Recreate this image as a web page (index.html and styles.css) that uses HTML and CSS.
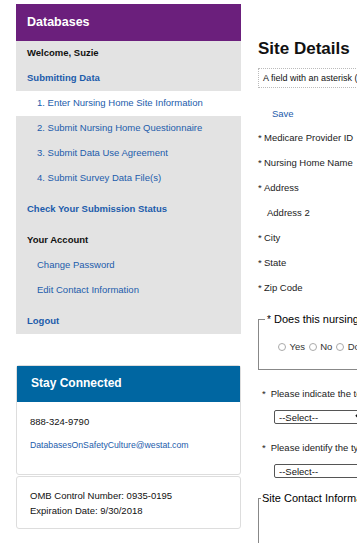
FILE: index.html
```html
<!DOCTYPE html>
<html lang="en">
<head>
  <meta charset="UTF-8" />
  <title>Site Details</title>
  <link rel="stylesheet" href="styles.css">
</head>
<body>
  <div class="page">
    <!-- left column -->
    <div class="sidebar">
      <div class="db-title">Databases</div>
      <div class="nav">
        <div class="nav-head">Welcome, Suzie</div>
        <a class="nav-link bold" href="#">Submitting Data</a>
        <a class="nav-sub current" href="#">1. Enter Nursing Home Site Information</a>
        <a class="nav-sub" href="#">2. Submit Nursing Home Questionnaire</a>
        <a class="nav-sub" href="#">3. Submit Data Use Agreement</a>
        <a class="nav-sub" href="#">4. Submit Survey Data File(s)</a>
        <a class="nav-link bold gap" href="#">Check Your Submission Status</a>
        <div class="nav-head gap">Your Account</div>
        <a class="nav-sub" href="#">Change Password</a>
        <a class="nav-sub" href="#">Edit Contact Information</a>
        <a class="nav-link bold gap" href="#">Logout</a>
      </div>

      <div class="card connect">
        <div class="card-head">Stay Connected</div>
        <div class="card-body">
          <div class="phone">888-324-9790</div>
          <a class="mail" href="#">DatabasesOnSafetyCulture@westat.com</a>
        </div>
      </div>
      <div class="card omb">
        <div>OMB Control Number: 0935-0195</div>
        <div>Expiration Date: 9/30/2018</div>
      </div>
    </div>

    <!-- main form -->
    <div class="main">
      <h2>Site Details</h2>
      <div class="note">A field with an asterisk (*) before it is a required field.</div>
      <a class="save" href="#">Save</a>

      <div class="field"><span class="star">*</span>Medicare Provider ID</div>
      <div class="field"><span class="star">*</span>Nursing Home Name</div>
      <div class="field"><span class="star">*</span>Address</div>
      <div class="field"><span class="star blank"></span>Address 2</div>
      <div class="field"><span class="star">*</span>City</div>
      <div class="field"><span class="star">*</span>State</div>
      <div class="field"><span class="star">*</span>Zip Code</div>

      <fieldset class="group">
        <legend><span class="star">*</span> Does this nursing home participate in the Medicare program?</legend>
        <div class="radios">
          <label><input type="radio" name="medicare" /> Yes</label>
          <label><input type="radio" name="medicare" /> No</label>
          <label><input type="radio" name="medicare" /> Don't know</label>
        </div>
      </fieldset>

      <div class="q"><span class="star">*</span> Please indicate the total number of beds in this nursing home</div>
      <select class="pick wide"><option>--Select--</option></select>

      <div class="q"><span class="star">*</span> Please identify the type of ownership of this nursing home</div>
      <select class="pick"><option>--Select--</option></select>

      <fieldset class="group contact">
        <legend>Site Contact Information</legend>
      </fieldset>
    </div>
  </div>
</body>
</html>
```

FILE: styles.css
```css
html, body {
  margin: 0;
  padding: 0;
  overflow: hidden;
  background: #fff;
}

body {
  font-family: "Liberation Sans", Arial, sans-serif;
  font-size: 9.5px;
  color: #222;
}

a {
  text-decoration: none;
  color: #1c5cab;
}

.page {
  display: flex;
  align-items: flex-start;
  width: 900px;
  padding: 4px 0 0 16px;
}

/* sidebar */
.sidebar {
  width: 225px;
  flex: none;
}

.db-title {
  background: #6b1f7c;
  color: #fff;
  font-weight: bold;
  font-size: 12.5px;
  height: 37px;
  line-height: 37px;
  padding-left: 11px;
}

.nav {
  background: #e3e3e3;
}

.nav-head,
.nav-link,
.nav-sub {
  display: block;
  line-height: 23px;
  height: 23px;
  padding: 0 0 2px 11px;
}

.nav-head {
  font-weight: bold;
  color: #111;
}

.bold {
  font-weight: bold;
}

.nav-sub {
  padding-left: 21px;
}

.nav-sub.current {
  background: #fff;
}

.gap {
  margin-top: 6px;
}

.card {
  border: 1px solid #ddd;
  border-radius: 3px;
  background: #fff;
}

.connect {
  margin-top: 31px;
}

.card-head {
  background: #0066a1;
  color: #fff;
  font-weight: bold;
  font-size: 12px;
  height: 36px;
  line-height: 35px;
  padding-left: 14px;
}

.card-body {
  padding: 13px 13px 22px;
}

.phone {
  line-height: 14px;
  color: #111;
}

.mail {
  display: block;
  margin-top: 9px;
  font-size: 8.7px;
  line-height: 14px;
}

.omb {
  margin-top: 1px;
  padding: 11px 13px 10px;
  line-height: 15px;
  color: #111;
}

/* main */
.main {
  width: 600px;
  flex: none;
  margin-left: 17px;
}

h2 {
  margin: 35px 0 0;
  font-size: 17px;
  line-height: 20px;
  color: #111;
}

.note {
  margin-top: 9px;
  height: 18px;
  line-height: 18px;
  border: 1px dotted #bbb;
  padding-left: 4px;
  font-size: 9px;
  color: #111;
}

.save {
  display: block;
  margin-top: 13px;
  padding-left: 14px;
  line-height: 25px;
}

.field {
  line-height: 24px;
  height: 24px;
  padding-bottom: 1px;
}

.star {
  display: inline-block;
  width: 6px;
}

.star.blank {
  width: 9px;
}

.group {
  margin: 11px 0 0;
  padding: 0 0 0 19px;
  border: 1px solid #888;
  border-radius: 0;
}

.group legend {
  margin-left: -13px;
  padding: 0 2px;
  font-size: 11px;
  line-height: 14px;
  color: #000;
}

.group legend .star {
  width: auto;
  font-size: 10px;
}

.radios {
  padding: 13px 0 15px;
  line-height: 14px;
  color: #333;
}

.radios label {
  margin-right: 1px;
}

.radios input {
  -webkit-appearance: none;
  appearance: none;
  width: 8px;
  height: 8px;
  margin: 0 1px 0 0;
  border: 1px solid #aaa;
  border-radius: 50%;
  vertical-align: -1px;
}

.q {
  margin-top: 14px;
  padding-left: 4px;
  line-height: 20px;
  white-space: nowrap;
}

.pick {
  display: block;
  margin: 6px 0 0 16px;
  width: 104px;
  height: 14px;
  padding: 0;
  font-family: "Liberation Sans", Arial, sans-serif;
  font-size: 9.5px;
  color: #111;
  border: 1px solid #555;
  border-radius: 2px;
  background: #fff;
}

.pick.wide {
  width: 95px;
}

.contact {
  margin-top: 13px;
  height: 60px;
}

.contact legend {
  margin-left: -17px;
  padding: 0 1px;
}
```
